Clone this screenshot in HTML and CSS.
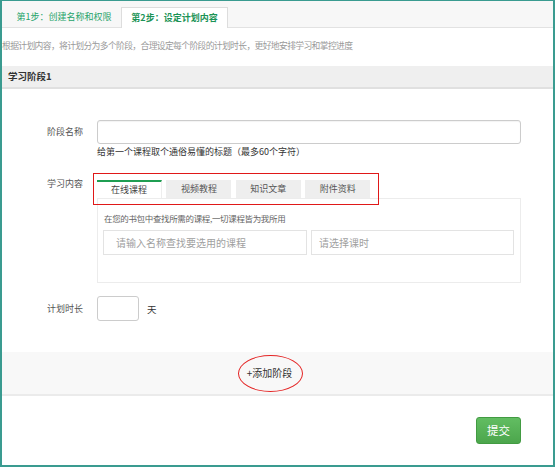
FILE: index.html
```html
<!DOCTYPE html>
<html lang="zh-CN">
<head>
<meta charset="utf-8">
<title>设定计划内容</title>
<link rel="stylesheet" href="styles.css">
</head>
<body>
<div class="frame">
  <div class="steps">
    <div class="step">第1步：创建名称和权限</div>
    <div class="step active">第2步：设定计划内容</div>
  </div>
  <p class="desc">根据计划内容，将计划分为多个阶段，合理设定每个阶段的计划时长，更好地安排学习和掌控进度</p>
  <div class="stage-head">学习阶段1</div>
  <div class="form">
    <div class="row row-name">
      <div class="label">阶段名称</div>
      <div class="field">
        <input class="text-input" type="text">
        <p class="hint">给第一个课程取个通俗易懂的标题（最多60个字符）</p>
      </div>
    </div>
    <div class="row row-content">
      <div class="label label-top">学习内容</div>
      <div class="field">
        <div class="ctabs">
          <div class="ctab active">在线课程</div>
          <div class="ctab">视频教程</div>
          <div class="ctab">知识文章</div>
          <div class="ctab">附件资料</div>
          <div class="mark-rect"></div>
        </div>
        <div class="panel">
          <p class="panel-tip">在您的书包中查找所需的课程,一切课程皆为我所用</p>
          <div class="panel-inputs">
            <input class="search search-name" type="text" placeholder="请输入名称查找要选用的课程">
            <input class="search search-hour" type="text" placeholder="请选择课时">
          </div>
        </div>
      </div>
    </div>
    <div class="row row-days">
      <div class="label">计划时长</div>
      <input class="days-input" type="text">
      <span class="unit">天</span>
    </div>
  </div>
  <div class="add-bar">
    <span class="add">+添加阶段<span class="mark-ellipse"></span></span>
  </div>
  <div class="actions">
    <button class="submit" type="button">提交</button>
  </div>
</div>
</body>
</html>
```

FILE: styles.css
```css
* {
  box-sizing: border-box;
}

html, body {
  margin: 0;
  padding: 0;
  background: #ffffff;
}

body {
  font-family: "Noto Sans CJK SC", "Noto Sans", "Liberation Sans", sans-serif;
  color: #333333;
}

.frame {
  width: 555px;
  height: 467px;
  border: 2px solid #3a9b90;
  border-top-width: 1px;
  border-bottom-width: 2px;
  overflow: hidden;
  background: #ffffff;
}

/* step tabs */
.steps {
  display: flex;
  align-items: flex-end;
  gap: 2px;
  height: 27px;
  padding-left: 7px;
  background: #f7f7f7;
  border-bottom: 1px solid #e2e2e2;
}

.step {
  width: 110px;
  height: 20px;
  line-height: 19px;
  text-align: center;
  font-size: 9px;
  color: #25a36a;
  white-space: nowrap;
}

.step.active {
  width: 107px;
  height: 21px;
  margin-bottom: -1px;
  background: #ffffff;
  border: 1px solid #dddddd;
  border-bottom: none;
  font-weight: bold;
  line-height: 20px;
  color: #1b9356;
}

.desc {
  margin: 12px 0 14px;
  font-size: 8.8px;
  letter-spacing: -0.65px;
  line-height: 12px;
  color: #9a9a9a;
  white-space: nowrap;
}

.stage-head {
  height: 23px;
  line-height: 21px;
  padding-left: 6px;
  background: #efefef;
  border-bottom: 2px solid #e0e0e0;
  font-size: 9.5px;
  font-weight: bold;
  color: #333333;
}

/* form */
.form {
  padding: 31px 0 31px 45px;
}

.row {
  display: flex;
  align-items: flex-start;
}

.label {
  width: 50px;
  flex: none;
  font-size: 9px;
  line-height: 24px;
  color: #555555;
}

.label-top {
  line-height: 12px;
  margin-top: -2px;
}

.field {
  display: flex;
  flex-direction: column;
}

.text-input {
  width: 424px;
  height: 24px;
  margin: 0;
  border: 1px solid #cccccc;
  border-radius: 3px;
  box-shadow: inset 0 1px 1px rgba(0, 0, 0, 0.05);
  background: #ffffff;
}

.hint {
  margin: 2px 0 0;
  font-size: 9px;
  line-height: 12px;
  color: #333333;
  white-space: nowrap;
}

.row-content {
  margin-top: 22px;
}

.ctabs {
  position: relative;
  display: flex;
  gap: 4.4px;
}

.ctab {
  width: 65px;
  height: 18px;
  line-height: 18px;
  text-align: center;
  font-size: 9px;
  color: #555555;
  background: #eeeeee;
}

.ctab.active {
  background: #ffffff;
  border-top: 2px solid #1f9e52;
  border-right: 1px solid #eeeeee;
  line-height: 16px;
  color: #444444;
}

.mark-rect {
  position: absolute;
  left: -4px;
  top: -7px;
  width: 286px;
  height: 32px;
  border: 1px solid #e01818;
  pointer-events: none;
}

.panel {
  width: 424px;
  height: 85px;
  padding: 13px 5px 0 5px;
  border: 1px solid #ececec;
}

.panel-tip {
  margin: 0 0 6px 1px;
  font-size: 8.5px;
  letter-spacing: -0.35px;
  line-height: 12px;
  color: #666666;
  white-space: nowrap;
}

.panel-inputs {
  display: flex;
  gap: 4px;
}

.search {
  height: 25px;
  margin: 0;
  border: 1px solid #e3e3e3;
  background: #ffffff;
  font-family: "Noto Sans CJK SC", "Noto Sans", sans-serif;
  font-size: 10px;
  color: #333333;
  outline: none;
}

.search::placeholder {
  color: #a0a0a0;
}

.search-name {
  width: 204px;
  padding-left: 12px;
}

.search-hour {
  width: 203px;
  padding-left: 7px;
}

.row-days {
  margin-top: 13px;
  align-items: center;
}

.row-days .label {
  line-height: 25px;
}

.days-input {
  width: 42px;
  height: 25px;
  margin: 0;
  border: 1px solid #cccccc;
  border-radius: 3px;
  background: #ffffff;
}

.unit {
  margin-left: 8px;
  font-size: 9.5px;
  color: #333333;
}

/* add stage */
.add-bar {
  height: 44px;
  display: flex;
  justify-content: center;
  align-items: center;
  padding-right: 16px;
  padding-bottom: 1px;
  background: #f8f8f8;
  border-bottom: 2px solid #ebebeb;
}

.add {
  position: relative;
  font-size: 10px;
  line-height: 14px;
  color: #333333;
}

.mark-ellipse {
  position: absolute;
  left: -9px;
  top: -11px;
  width: 65px;
  height: 37px;
  border: 1px solid #e42424;
  border-radius: 50%;
  pointer-events: none;
}

.actions {
  display: flex;
  justify-content: flex-end;
  padding: 21px 32px 0 0;
}

.submit {
  width: 45px;
  height: 27px;
  padding: 0;
  border: 1px solid #429b42;
  border-radius: 3px;
  background: linear-gradient(#62bd62, #4ca64c);
  color: #ffffff;
  font-family: "Noto Sans CJK SC", "Noto Sans", sans-serif;
  font-size: 11.5px;
  line-height: 25px;
}
```
